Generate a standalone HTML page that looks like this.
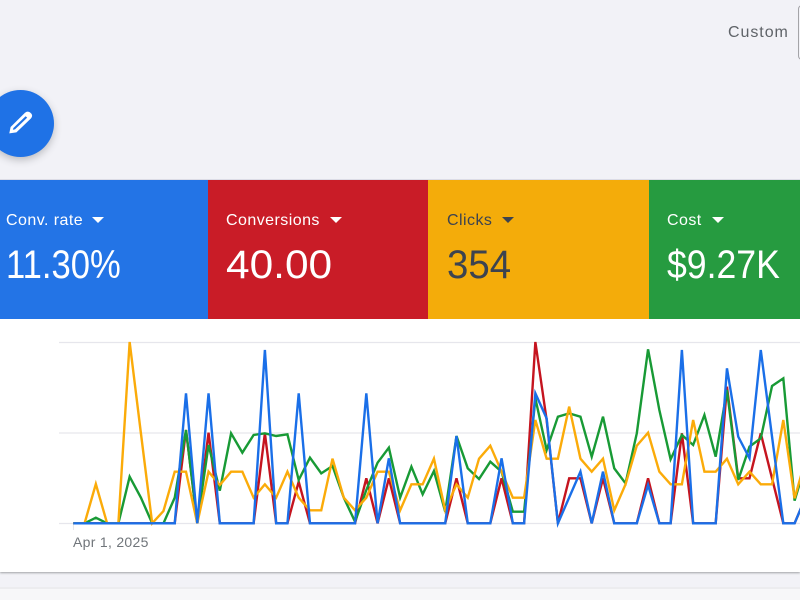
<!DOCTYPE html>
<html><head><meta charset="utf-8"><style>
html,body{margin:0;padding:0;width:800px;height:600px;overflow:hidden;background:#f2f2f7;font-family:"Liberation Sans",sans-serif}
.a{position:absolute}
.t{position:absolute;top:180px;height:139px}
.l{position:absolute;top:31px;font-size:16px;line-height:20px;white-space:nowrap;letter-spacing:.45px}
.v{position:absolute;top:62px;font-size:40px;line-height:46px;white-space:nowrap;transform-origin:0 50%}
.c{position:absolute;top:37px;width:0;height:0;border-left:6px solid transparent;border-right:6px solid transparent;border-top:6px solid currentColor}
</style></head><body>
<div class="a" style="left:728px;top:23px;font-size:16px;line-height:20px;color:#5f6368;letter-spacing:.95px">Custom</div>
<div class="a" style="left:798px;top:5px;width:10px;height:55px;border:1px solid #a4a4a8;border-radius:4px;box-sizing:border-box"></div>
<div class="a" style="left:-13px;top:90px;width:67px;height:67px;border-radius:50%;background:#1f72e6;box-shadow:0 3px 8px rgba(60,64,67,.3)"></div>
<svg class="a" style="left:0;top:100px;filter:blur(.3px)" width="45" height="45" viewBox="0 0 45 45"><path d="M9.3 33.4 L10.6 27 L25 12.8 Q27.5 10.6 30 12.4 L31.4 13.8 Q33 16 31 18.4 L16.4 32.4 Z" fill="#fff"/><path d="M12.8 29.8 L13.4 28 L25.6 16.2 L27.2 17.6 L15 29.4 Z" fill="#1f72e6"/></svg>
<div class="a" style="left:0;top:179px;width:800px;height:1px;background:#dcdce6"></div>
<div class="a" style="left:0;top:319px;width:800px;height:253px;background:#fff;box-shadow:0 1px 2px rgba(60,64,67,.45)"></div>
<div class="a" style="left:0;top:587px;width:800px;height:2px;background:#ececef"></div>
<div class="a" style="left:0;top:589px;width:800px;height:11px;background:#f7f7f9"></div>
<div class="t" style="left:0;width:208px;background:#2374e6;color:#fff"><div class="l" style="left:6px">Conv. rate</div><div class="c" style="left:92px"></div><div class="v" style="left:6px;transform:scaleX(.865)">11.30%</div></div>
<div class="t" style="left:208px;width:220px;background:#c91c27;color:#fff"><div class="l" style="left:18px">Conversions</div><div class="c" style="left:122px"></div><div class="v" style="left:18px;transform:scaleX(1.06)">40.00</div></div>
<div class="t" style="left:428px;width:221px;background:#f4ac0a;color:#3c4350"><div class="l" style="left:19px">Clicks</div><div class="c" style="left:74px"></div><div class="v" style="left:19px;transform:scaleX(.96)">354</div></div>
<div class="t" style="left:649px;width:151px;background:#269b40;color:#fff"><div class="l" style="left:18px">Cost</div><div class="c" style="left:63px"></div><div class="v" style="left:18px;transform:scaleX(.89)">$9.27K</div></div>
<svg class="a" style="left:0;top:0;filter:blur(.3px)" width="800" height="600">
<path d="M59 342.5H800M59 433H800M59 523.5H800" stroke="#e6e6ec" stroke-width="1.2" fill="none"/>
<path d="M73.5 524V530" stroke="#e8e8ec" stroke-width="1" fill="none"/>
<g transform="translate(73.3 330) scale(11.27 .33333)" fill="none" stroke-width="2.4" stroke-linejoin="miter">
<polyline vector-effect="non-scaling-stroke" stroke="#c5141f" points="0,580 9,580 10,300 11,580 12,308 13,580 16,580 17,310 18,580 19,580 20,455 21,580 25,580 26,445 27,580 28,445 29,580 33,580 34,445 35,580 37,580 38,445 39,580 40,580 41,36 42,270 43,580 44,445 45,445 46,580 47,445 48,580 50,580 51,445 52,580 53,580 54,310 55,580 57,580 58,170 59,445 60,445 61,310 62,445 63,580 64,580 65,500"/>
<polyline vector-effect="non-scaling-stroke" stroke="#189a35" points="0,580 1,580 2,563 3,580 4,580 5,440 6,503 7,580 8,580 9,503 10,300 11,580 12,345 13,482 14,310 15,368 16,315 17,310 18,318 19,313 20,450 21,383 22,430 23,408 24,503 25,575 26,480 27,398 28,353 29,503 30,410 31,493 32,423 33,545 34,318 35,415 36,447 37,395 38,425 39,545 40,545 41,205 42,360 43,260 44,250 45,260 46,380 47,260 48,415 49,460 50,310 51,58 52,240 53,388 54,315 55,345 56,255 57,380 58,180 59,450 60,350 61,325 62,168 63,145 64,512 65,400"/>
<polyline vector-effect="non-scaling-stroke" stroke="#fbab09" points="0,580 1,580 2,462 3,580 4,580 5,36 6,310 7,580 8,543 9,425 10,425 11,580 12,425 13,465 14,425 15,425 16,503 17,463 18,503 19,425 20,503 21,541 22,541 23,386 24,503 25,541 26,503 27,425 28,425 29,541 30,463 31,463 32,386 33,541 34,463 35,503 36,386 37,347 38,425 39,503 40,503 41,270 42,386 43,386 44,230 45,386 46,425 47,386 48,541 49,463 50,347 51,308 52,425 53,463 54,463 55,270 56,425 57,425 58,386 59,463 60,425 61,463 62,463 63,270 64,505 65,386"/>
<polyline vector-effect="non-scaling-stroke" stroke="#1a6fe8" points="0,580 9,580 10,190 11,580 12,190 13,580 16,580 17,60 18,580 19,580 20,190 21,580 25,580 26,190 27,580 28,385 29,580 33,580 34,318 35,580 37,580 38,385 39,580 40,580 41,190 42,265 43,580 45,425 46,580 47,425 48,580 50,580 51,465 52,580 53,580 54,60 55,580 57,580 58,115 59,320 60,385 61,60 62,320 63,580 64,580 65,500"/>
</g>
</svg>
<div class="a" style="left:73px;top:533px;font-size:14px;line-height:18px;color:#70757a;letter-spacing:.3px">Apr 1, 2025</div>
</body></html>
